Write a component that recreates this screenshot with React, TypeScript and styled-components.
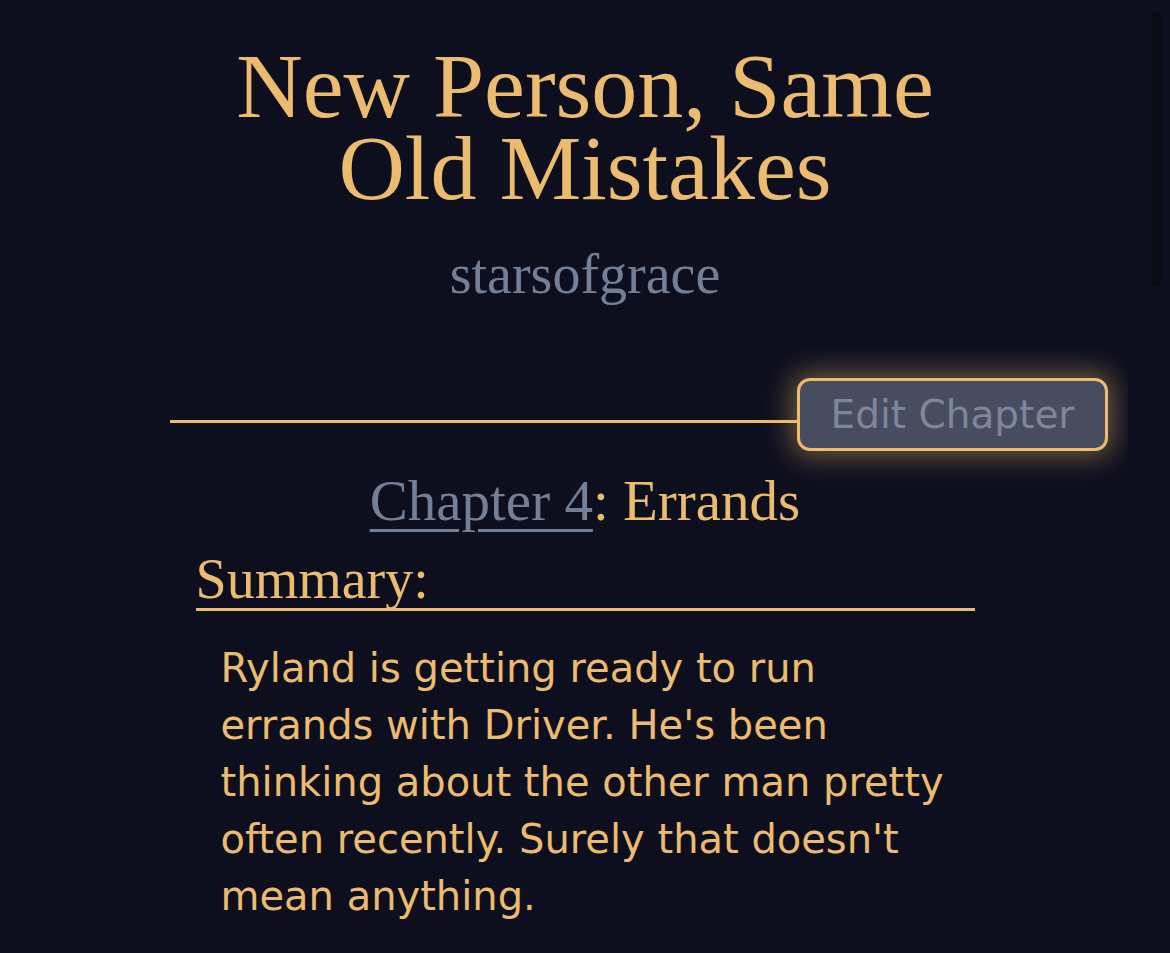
import React from 'react'
import styled, { createGlobalStyle } from 'styled-components'

const gold = '#ebbb6f'
const slate = '#737e97'

const GlobalStyle = createGlobalStyle`
  html, body {
    margin: 0;
    padding: 0;
    background: #0e0f1e;
    overflow: hidden;
  }
  #root {
    min-height: 953px;
  }
`

const Page = styled.div`
  min-height: 953px;
  background: #0e0f1e;
  color: ${gold};
  font-family: "Liberation Serif", "Times New Roman", serif;
  padding-top: 45px;
  display: flex;
  flex-direction: column;
`

const Title = styled.h1`
  margin: 0 auto;
  width: 780px;
  text-align: center;
  font-weight: normal;
  font-size: 92px;
  line-height: 82px;
  color: ${gold};
`

const Author = styled.div`
  margin-top: 33px;
  text-align: center;
  font-size: 56px;
  line-height: 64px;
  color: ${slate};
`

// glow is cut off at the right edge of the content column
const EditRow = styled.div`
  margin: 72px 42px 0 170px;
  padding: 0 20px 18px 0;
  overflow-x: clip;
  display: flex;
  align-items: center;
`

const Rule = styled.div`
  flex: 1;
  height: 3px;
  margin-top: 14px;
  background: ${gold};
`

const EditButton = styled.button`
  box-sizing: border-box;
  width: 311px;
  height: 73px;
  border: 3px solid ${gold};
  border-radius: 13px;
  background: #474d5f;
  color: #7c869c;
  font-family: "DejaVu Sans", Verdana, sans-serif;
  font-size: 39px;
  padding: 0;
  box-shadow: 0 0 28px 5px rgba(235, 187, 111, 0.45);
  cursor: pointer;
`

const ChapterHeading = styled.h2`
  margin: 0;
  text-align: center;
  font-weight: normal;
  font-size: 57px;
  line-height: 64px;
  color: ${gold};
`

const ChapterLink = styled.a`
  color: ${slate};
  text-decoration: underline;
  text-decoration-thickness: 3px;
  text-underline-offset: 9px;
`

const SummaryBox = styled.section`
  width: 779px;
  margin: 18px auto 0;
`

const SummaryLabel = styled.h3`
  margin: 0;
  font-weight: normal;
  font-size: 56px;
  line-height: 57px;
  color: ${gold};
  border-bottom: 3px solid ${gold};
`

const SummaryText = styled.p`
  margin: 29px 0 0;
  padding: 0 25px;
  font-family: "DejaVu Sans", Verdana, sans-serif;
  font-size: 40px;
  line-height: 57px;
  color: ${gold};
`

const ScrollThumb = styled.div`
  position: fixed;
  top: 12px;
  left: 1152px;
  width: 9px;
  height: 275px;
  border-radius: 5px;
  background: #090a14;
`

export default function App() {
  return (
    <>
      <GlobalStyle />
      <Page>
        <Title>New Person, Same Old Mistakes</Title>
        <Author>starsofgrace</Author>
        <EditRow>
          <Rule />
          <EditButton>Edit Chapter</EditButton>
        </EditRow>
        <ChapterHeading>
          <ChapterLink href="#">Chapter 4</ChapterLink>: Errands
        </ChapterHeading>
        <SummaryBox>
          <SummaryLabel>Summary:</SummaryLabel>
          <SummaryText>
            Ryland is getting ready to run errands with Driver. He's been thinking about the
            other man pretty often recently. Surely that doesn't mean anything.
          </SummaryText>
        </SummaryBox>
      </Page>
      <ScrollThumb />
    </>
  )
}
